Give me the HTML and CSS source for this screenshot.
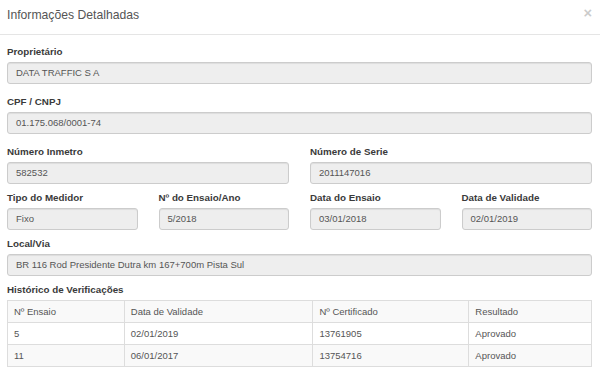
FILE: index.html
```html
<!DOCTYPE html>
<html lang="pt-BR">
<head>
    <meta charset="UTF-8">
    <meta name="viewport" content="width=device-width, initial-scale=1.0">
    <title>Informações Detalhadas</title>
    <link rel="stylesheet" href="styles.css">
</head>
<body>
    <div class="modal">
        <div class="modal-header">
            <h4 class="modal-title">Informações Detalhadas</h4>
            <span class="close">&times;</span>
        </div>
        <div class="modal-body">
            <div class="form-group">
                <label>Proprietário</label>
                <div class="form-control">DATA TRAFFIC S A</div>
            </div>
            <div class="form-group">
                <label>CPF / CNPJ</label>
                <div class="form-control">01.175.068/0001-74</div>
            </div>
            <div class="row cols-2 tight">
                <div class="form-group">
                    <label>Número Inmetro</label>
                    <div class="form-control">582532</div>
                </div>
                <div class="form-group">
                    <label>Número de Serie</label>
                    <div class="form-control">2011147016</div>
                </div>
            </div>
            <div class="row cols-4 tight">
                <div class="form-group">
                    <label>Tipo do Medidor</label>
                    <div class="form-control">Fixo</div>
                </div>
                <div class="form-group">
                    <label>Nº do Ensaio/Ano</label>
                    <div class="form-control">5/2018</div>
                </div>
                <div class="form-group">
                    <label>Data do Ensaio</label>
                    <div class="form-control">03/01/2018</div>
                </div>
                <div class="form-group">
                    <label>Data de Validade</label>
                    <div class="form-control">02/01/2019</div>
                </div>
            </div>
            <div class="form-group tight">
                <label>Local/Via</label>
                <div class="form-control">BR 116 Rod Presidente Dutra km 167+700m Pista Sul</div>
            </div>
            <label>Histórico de Verificações</label>
            <table class="table">
                <tr>
                    <td class="c1">Nº Ensaio</td>
                    <td class="c2">Data de Validade</td>
                    <td class="c3">Nº Certificado</td>
                    <td class="c4">Resultado</td>
                </tr>
                <tr>
                    <td>5</td>
                    <td>02/01/2019</td>
                    <td>13761905</td>
                    <td>Aprovado</td>
                </tr>
                <tr>
                    <td>11</td>
                    <td>06/01/2017</td>
                    <td>13754716</td>
                    <td>Aprovado</td>
                </tr>
            </table>
        </div>
    </div>
</body>
</html>
```

FILE: styles.css
```css
body {
    margin: 0;
    background: #fff;
    font-family: "Liberation Sans", Arial, sans-serif;
    font-size: 9.5px;
    color: #555;
}

.modal-header {
    display: flex;
    justify-content: space-between;
    align-items: flex-start;
    padding: 5px 8px 9px 7px;
    border-bottom: 1px solid #e5e5e5;
}

.modal-title {
    margin: 0;
    font-size: 12.2px;
    font-weight: normal;
    line-height: 20px;
    color: #555;
}

.close {
    font-size: 14.7px;
    font-weight: bold;
    line-height: 20px;
    color: #000;
    opacity: 0.2;
    margin-top: -2px;
}

.modal-body {
    padding: 10px 8px 0 7px;
}

label {
    display: block;
    font-size: 9.8px;
    font-weight: bold;
    line-height: 14px;
    margin-bottom: 3px;
    color: #3a3a3a;
}

.form-group {
    margin-bottom: 11px;
}

.tight,
.tight .form-group {
    margin-bottom: 7px;
}

.form-control {
    height: 22px;
    box-sizing: border-box;
    padding: 0 8px;
    line-height: 20px;
    background: #eee;
    border: 1px solid #ccc;
    border-radius: 3px;
    box-shadow: inset 0 1px 1px rgba(0, 0, 0, 0.075);
    color: #555;
}

.row {
    display: grid;
    column-gap: 21px;
}

.cols-2 {
    grid-template-columns: 1fr 1fr;
}

.cols-4 {
    grid-template-columns: repeat(4, 1fr);
}

.row .form-group {
    margin-bottom: 0;
}

.table {
    width: 100%;
    border-collapse: collapse;
    border: 1px solid #ddd;
}

.table td {
    border: 1px solid #ddd;
    padding: 4px 6px 3px;
    line-height: 14px;
    color: #555;
}

.table tr:nth-child(odd) td {
    background: #f9f9f9;
}

.c1 { width: 20%; }
.c2 { width: 32.3%; }
.c3 { width: 26.7%; }
.c4 { width: 21%; }
```
